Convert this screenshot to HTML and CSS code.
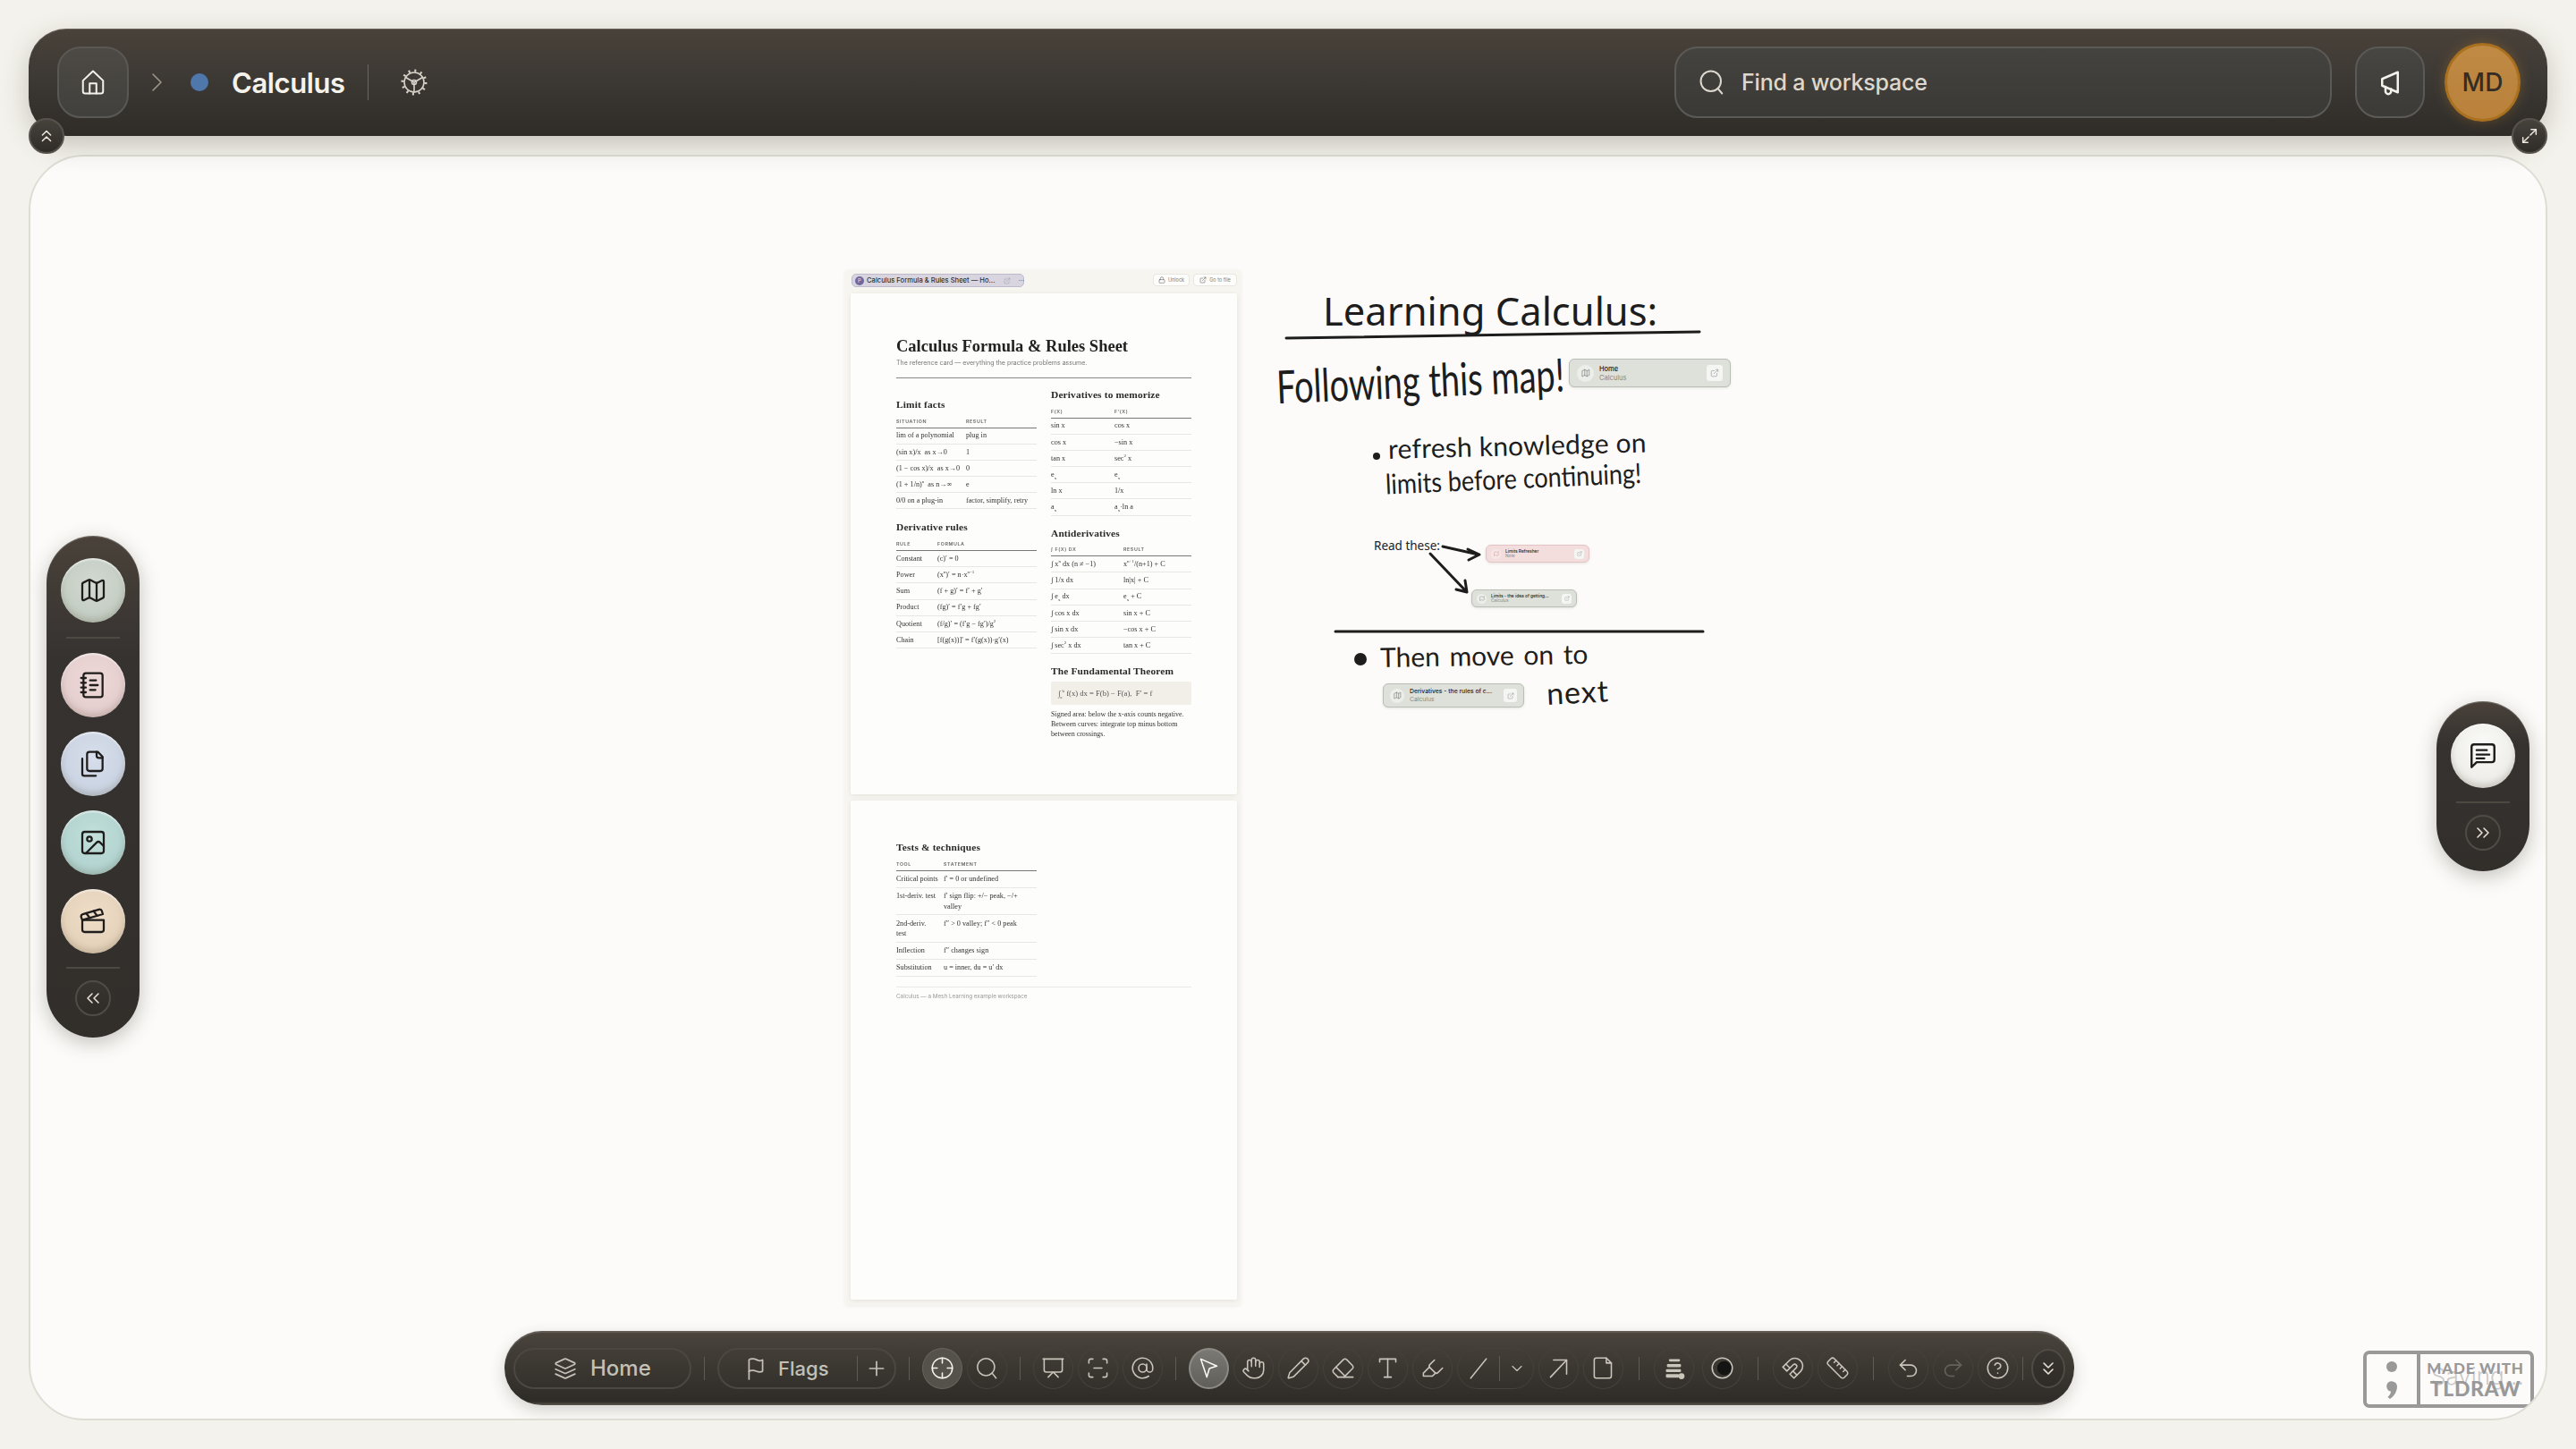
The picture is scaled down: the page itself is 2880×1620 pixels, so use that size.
FILE: index.html
```html
<!DOCTYPE html>
<html lang="en">
<head>
  <meta charset="UTF-8" />
  <title>Calculus</title>
  <link rel="stylesheet" href="styles.css">
</head>
<body>
  <header class="topbar">
    <button class="home-btn">
      <svg class="ico" viewBox="0 0 24 24"><path d="M3 10.500 12 2l9 8.500V20a2 2 0 0 1-2 2H5a2 2 0 0 1-2-2z"/><path d="M9 22v-9h6v9"/></svg>
    </button>
    <svg class="crumb" viewBox="0 0 24 24"><path d="m8 3 9 9-9 9"/></svg>
    <span class="dot"></span>
    <span class="ws-name">Calculus</span>
    <span class="bar-sep"></span>
    <svg class="gear" viewBox="0 0 32 32">
      <circle class="gear-teeth" cx="16" cy="16" r="13"/>
      <circle cx="16" cy="16" r="11"/>
      <path d="M16 16 6.500 10.500M16 16l9.500-5.500M16 16v11"/>
      <circle cx="16" cy="16" r="2.500"/>
    </svg>
    <div class="spacer"></div>
    <div class="search">
      <svg viewBox="0 0 24 24"><circle cx="11" cy="11" r="9"/><path d="m21 22-3.800-4.500"/></svg>
      <span>Find a workspace</span>
    </div>
    <button class="news-btn">
      <svg viewBox="0 0 24 24"><path d="M5 9v6l14 6V3z"/><path d="M8 16v4a2.500 2.500 0 0 0 5 0v-2"/></svg>
    </button>
    <div class="avatar">MD</div>
    <button class="corner corner-left"><svg viewBox="0 0 24 24"><path d="m17 11-5-5-5 5"/><path d="m17 18-5-5-5 5"/></svg></button>
    <button class="corner corner-right"><svg viewBox="0 0 24 24"><path d="M14 4h6v6"/><path d="m20 4-7 7"/><path d="M10 20H4v-6"/><path d="m4 20 7-7"/></svg></button>
  </header>

  <main class="canvas">
    <div class="board">
      <section class="embed">
        <div class="embed-head">
          <div class="embed-tag">
            <span class="tag-dot">P</span>
            <span class="tag-title">Calculus Formula &amp; Rules Sheet — Ho...</span>
            <svg viewBox="0 0 24 24"><path d="M15 3h6v6"/><path d="M10 14 21 3"/><path d="M18 13v6a2 2 0 0 1-2 2H5a2 2 0 0 1-2-2V8a2 2 0 0 1 2-2h6"/></svg>
            <span class="tag-more">···</span>
          </div>
          <div class="embed-btn embed-btn-lock">
            <svg viewBox="0 0 24 24"><rect x="3" y="11" width="18" height="11" rx="2"/><path d="M7 11V7a5 5 0 0 1 10 0v4"/></svg>Unlock
          </div>
          <div class="embed-btn">
            <svg viewBox="0 0 24 24"><path d="M15 3h6v6"/><path d="M10 14 21 3"/><path d="M18 13v6a2 2 0 0 1-2 2H5a2 2 0 0 1-2-2V8a2 2 0 0 1 2-2h6"/></svg>Go to file
          </div>
        </div>

        <article class="page page-one">
          <h1>Calculus Formula &amp; Rules Sheet</h1>
          <p class="lede">The reference card — everything the practice problems assume.</p>
          <div class="cols">
            <div class="col col-left">
              <h2>Limit facts</h2>
              <table class="t-limits">
                <tr><th>Situation</th><th>Result</th></tr>
                <tr><td>lim of a polynomial</td><td>plug in</td></tr>
                <tr><td>(sin x)/x &nbsp;as x→0</td><td>1</td></tr>
                <tr><td>(1 − cos x)/x &nbsp;as x→0</td><td>0</td></tr>
                <tr><td>(1 + 1/n)<sup>n</sup> &nbsp;as n→∞</td><td>e</td></tr>
                <tr><td>0/0 on a plug-in</td><td>factor, simplify, retry</td></tr>
              </table>
              <h2>Derivative rules</h2>
              <table class="t-rules">
                <tr><th>Rule</th><th>Formula</th></tr>
                <tr><td>Constant</td><td>(c)′ = 0</td></tr>
                <tr><td>Power</td><td>(x<sup>n</sup>)′ = n·x<sup>n−1</sup></td></tr>
                <tr><td>Sum</td><td>(f + g)′ = f′ + g′</td></tr>
                <tr><td>Product</td><td>(fg)′ = f′g + fg′</td></tr>
                <tr><td>Quotient</td><td>(f/g)′ = (f′g − fg′)/g<sup>2</sup></td></tr>
                <tr><td>Chain</td><td>[f(g(x))]′ = f′(g(x))·g′(x)</td></tr>
              </table>
            </div>
            <div class="col col-right">
              <h2>Derivatives to memorize</h2>
              <table class="t-derivs">
                <tr><th>f(x)</th><th>f′(x)</th></tr>
                <tr><td>sin x</td><td>cos x</td></tr>
                <tr><td>cos x</td><td>−sin x</td></tr>
                <tr><td>tan x</td><td>sec<sup>2</sup> x</td></tr>
                <tr><td>e<sub>x</sub></td><td>e<sub>x</sub></td></tr>
                <tr><td>ln x</td><td>1/x</td></tr>
                <tr><td>a<sub>x</sub></td><td>a<sub>x</sub>·ln a</td></tr>
              </table>
              <h2>Antiderivatives</h2>
              <table class="t-anti">
                <tr><th>∫ f(x) dx</th><th>Result</th></tr>
                <tr><td>∫ x<sup>n</sup> dx (n ≠ −1)</td><td>x<sup>n+1</sup>/(n+1) + C</td></tr>
                <tr><td>∫ 1/x dx</td><td>ln|x| + C</td></tr>
                <tr><td>∫ e<sub>x</sub> dx</td><td>e<sub>x</sub> + C</td></tr>
                <tr><td>∫ cos x dx</td><td>sin x + C</td></tr>
                <tr><td>∫ sin x dx</td><td>−cos x + C</td></tr>
                <tr><td>∫ sec<sup>2</sup> x dx</td><td>tan x + C</td></tr>
              </table>
              <h2>The Fundamental Theorem</h2>
              <div class="formula">∫<sub>a</sub><sup>b</sup> f(x) dx = F(b) − F(a), &nbsp;F′ = f</div>
              <p class="note">Signed area: below the x-axis counts negative. Between curves: integrate top minus bottom between crossings.</p>
            </div>
          </div>
        </article>

        <article class="page page-two">
          <div class="col col-left">
            <h2>Tests &amp; techniques</h2>
            <table class="t-tests">
              <tr><th>Tool</th><th>Statement</th></tr>
              <tr><td>Critical points</td><td>f′ = 0 or undefined</td></tr>
              <tr><td>1st-deriv. test</td><td>f′ sign flip: +/− peak, −/+ valley</td></tr>
              <tr><td>2nd-deriv.<br>test</td><td>f″ &gt; 0 valley; f″ &lt; 0 peak</td></tr>
              <tr><td>Inflection</td><td>f″ changes sign</td></tr>
              <tr><td>Substitution</td><td>u = inner, du = u′ dx</td></tr>
            </table>
          </div>
          <div class="page-foot">Calculus — a Mesh Learning example workspace</div>
        </article>
      </section>

      <div class="big-title">Learning Calculus:</div>
      <div class="hand hand-map">Following this map!</div>
      <div class="hand hand-refresh">refresh knowledge on</div>
      <div class="hand hand-limits">limits before continuing!</div>
      <div class="hand hand-then">Then move on to</div>
      <div class="hand hand-next">next</div>
      <div class="read-these">Read these:</div>

      <svg class="ink" viewBox="0 0 2880 1620">
        <path d="M1438 378 1900 371"/>
        <path d="M1493 706H1904"/>
        <path d="M1613 611 1653 620M1641 614 1654 620 1642 626"/>
        <path d="M1599 619 1640 662M1638 649 1640 662 1628 659"/>
        <circle class="ink-dot" cx="1539" cy="510" r="4"/>
        <circle class="ink-dot" cx="1521" cy="737" r="7"/>
      </svg>

      <div class="card card-home">
        <span class="card-ico"><svg viewBox="0 0 24 24"><path d="M3 6l6-3 6 3 6-3v15l-6 3-6-3-6 3z"/><path d="M9 3v15M15 6v15"/></svg></span>
        <span class="card-text"><b>Home</b><i>Calculus</i></span>
        <span class="card-open"><svg viewBox="0 0 24 24"><path d="M15 3h6v6"/><path d="M10 14 21 3"/><path d="M18 13v6a2 2 0 0 1-2 2H5a2 2 0 0 1-2-2V8a2 2 0 0 1 2-2h6"/></svg></span>
      </div>
      <div class="card card-note">
        <span class="card-ico"><svg viewBox="0 0 24 24"><path d="M3 6l6-3 6 3 6-3v15l-6 3-6-3-6 3z"/></svg></span>
        <span class="card-text"><b>Limits Refresher</b><i>Note</i></span>
        <span class="card-open"><svg viewBox="0 0 24 24"><path d="M15 3h6v6"/><path d="M10 14 21 3"/><path d="M18 13v6a2 2 0 0 1-2 2H5a2 2 0 0 1-2-2V8a2 2 0 0 1 2-2h6"/></svg></span>
      </div>
      <div class="card card-limits">
        <span class="card-ico"><svg viewBox="0 0 24 24"><path d="M3 6l6-3 6 3 6-3v15l-6 3-6-3-6 3z"/></svg></span>
        <span class="card-text"><b>Limits - the idea of getting...</b><i>Calculus</i></span>
        <span class="card-open"><svg viewBox="0 0 24 24"><path d="M15 3h6v6"/><path d="M10 14 21 3"/><path d="M18 13v6a2 2 0 0 1-2 2H5a2 2 0 0 1-2-2V8a2 2 0 0 1 2-2h6"/></svg></span>
      </div>
      <div class="card card-derivs">
        <span class="card-ico"><svg viewBox="0 0 24 24"><path d="M3 6l6-3 6 3 6-3v15l-6 3-6-3-6 3z"/><path d="M9 3v15M15 6v15"/></svg></span>
        <span class="card-text"><b>Derivatives - the rules of c...</b><i>Calculus</i></span>
        <span class="card-open"><svg viewBox="0 0 24 24"><path d="M15 3h6v6"/><path d="M10 14 21 3"/><path d="M18 13v6a2 2 0 0 1-2 2H5a2 2 0 0 1-2-2V8a2 2 0 0 1 2-2h6"/></svg></span>
      </div>
    </div>

    <nav class="rail rail-left">
      <button class="orb orb-map"><svg viewBox="0 0 24 24"><path d="M14.106 5.553a2 2 0 0 0 1.788 0l3.659-1.830A1 1 0 0 1 21 4.619v12.764a1 1 0 0 1-.553.894l-4.553 2.277a2 2 0 0 1-1.788 0l-4.212-2.106a2 2 0 0 0-1.788 0l-3.659 1.830A1 1 0 0 1 3 19.381V6.618a1 1 0 0 1 .553-.894l4.553-2.277a2 2 0 0 1 1.788 0z"/><path d="M15 5.764v15"/><path d="M9 3.236v15"/></svg></button>
      <span class="rail-sep"></span>
      <div class="rail-group">
        <button class="orb orb-note"><svg viewBox="0 0 24 24"><path d="M2 6h4M2 10h4M2 14h4M2 18h4"/><rect x="4" y="2" width="16" height="20" rx="2"/><path d="M9.500 8h5M9.500 12H16M9.500 16H14"/></svg></button>
        <button class="orb orb-file"><svg viewBox="0 0 24 24"><path d="M20 7h-3a2 2 0 0 1-2-2V2"/><path d="M9 18a2 2 0 0 1-2-2V4a2 2 0 0 1 2-2h7l4 4v10a2 2 0 0 1-2 2Z"/><path d="M3 7.600v12.800A1.600 1.600 0 0 0 4.600 22h9.800"/></svg></button>
        <button class="orb orb-image"><svg viewBox="0 0 24 24"><rect x="3" y="3" width="18" height="18" rx="2"/><circle cx="9" cy="9" r="2"/><path d="m21 15-3.086-3.086a2 2 0 0 0-2.828 0L6 21"/></svg></button>
        <button class="orb orb-clap"><svg viewBox="0 0 24 24"><path d="M20.200 6 3 11l-.9-2.400c-.3-1.100.3-2.200 1.300-2.500l13.500-4c1.100-.3 2.200.3 2.500 1.300Z"/><path d="m6.200 5.300 3.100 3.900"/><path d="m12.400 3.400 3.100 4"/><path d="M3 11h18v8a2 2 0 0 1-2 2H5a2 2 0 0 1-2-2Z"/></svg></button>
      </div>
      <span class="rail-sep rail-sep-low"></span>
      <button class="mini"><svg viewBox="0 0 24 24"><path d="m11 17-5-5 5-5"/><path d="m18 17-5-5 5-5"/></svg></button>
    </nav>

    <nav class="rail rail-right">
      <button class="orb orb-chat"><svg viewBox="0 0 24 24"><path d="M21 15a2 2 0 0 1-2 2H7l-4 4V5a2 2 0 0 1 2-2h14a2 2 0 0 1 2 2z"/><path d="M7 7.500h8M7 11h10M7 14h6"/></svg></button>
      <span class="rail-sep rail-sep-low"></span>
      <button class="mini"><svg viewBox="0 0 24 24"><path d="m6 17 5-5-5-5"/><path d="m13 17 5-5-5-5"/></svg></button>
    </nav>

    <div class="toolbar">
      <button class="pill pill-home">
        <svg viewBox="0 0 24 24"><path d="m12.830 2.180a2 2 0 0 0-1.660 0L2.600 6.080a1 1 0 0 0 0 1.830l8.580 3.910a2 2 0 0 0 1.660 0l8.580-3.900a1 1 0 0 0 0-1.830Z"/><path d="m22 17.650-9.170 4.160a2 2 0 0 1-1.660 0L2 17.650"/><path d="m22 12.650-9.170 4.160a2 2 0 0 1-1.660 0L2 12.650"/></svg>
        Home
      </button>
      <span class="tb-sep"></span>
      <div class="pill pill-flags">
        <svg viewBox="0 0 24 24"><path d="M5 15s1-1 4-1 4 1.500 7 1.500 3-1 3-1V3s-1 1-3 1-4-2-7-2-4 1-4 1z"/><path d="M5 23v-8"/></svg>
        <span>Flags</span>
        <i class="pill-div"></i>
        <svg class="pill-plus" viewBox="0 0 24 24"><path d="M5 12h14M12 5v14"/></svg>
      </div>
      <span class="tb-sep"></span>
      <div class="tools">
        <button class="tool tool-soft"><svg viewBox="0 0 24 24"><circle cx="12" cy="12" r="10"/><path d="M12 2v5M12 17v5M2 12h5M17 12h5"/></svg></button>
        <button class="tool"><svg viewBox="0 0 24 24"><circle cx="11" cy="11" r="8.500"/><path d="m21 22-4-5"/></svg></button>
      </div>
      <span class="tb-sep"></span>
      <div class="tools">
        <button class="tool"><svg viewBox="0 0 24 24"><path d="M2 3h20"/><path d="M21 3v11a2 2 0 0 1-2 2H5a2 2 0 0 1-2-2V3"/><path d="m7 21 5-5 5 5"/></svg></button>
        <button class="tool"><svg viewBox="0 0 24 24"><path d="M3 7V5a2 2 0 0 1 2-2h2"/><path d="M17 3h2a2 2 0 0 1 2 2v2"/><path d="M21 17v2a2 2 0 0 1-2 2h-2"/><path d="M7 21H5a2 2 0 0 1-2-2v-2"/><path d="M8 12h8"/></svg></button>
        <button class="tool"><svg viewBox="0 0 24 24"><circle cx="12" cy="12" r="4"/><path d="M16 8v5a3 3 0 0 0 6 0v-1a10 10 0 1 0-4 8"/></svg></button>
      </div>
      <span class="tb-sep"></span>
      <div class="tools">
        <button class="tool tool-active"><svg viewBox="0 0 24 24"><path d="m4 3 16 7-7.500 2.500L10 21z"/></svg></button>
        <button class="tool"><svg viewBox="0 0 24 24"><path d="M18 11V6a2 2 0 0 0-2-2a2 2 0 0 0-2 2"/><path d="M14 10V4a2 2 0 0 0-2-2a2 2 0 0 0-2 2v2"/><path d="M10 10.500V6a2 2 0 0 0-2-2a2 2 0 0 0-2 2v8"/><path d="M18 8a2 2 0 1 1 4 0v6a8 8 0 0 1-8 8h-2c-2.800 0-4.500-.86-5.990-2.340l-3.600-3.600a2 2 0 0 1 2.830-2.820L7 15"/></svg></button>
        <button class="tool"><svg viewBox="0 0 24 24"><path d="M21.174 6.812a1 1 0 0 0-3.986-3.987L3.842 16.174a2 2 0 0 0-.5.83l-1.321 4.352a.5.5 0 0 0 .623.622l4.353-1.320a2 2 0 0 0 .83-.497z"/><path d="m15 5 4 4"/></svg></button>
        <button class="tool"><svg viewBox="0 0 24 24"><path d="m7 21-4.300-4.300c-1-1-1-2.500 0-3.400l9.600-9.600c1-1 2.500-1 3.400 0l5.600 5.600c1 1 1 2.500 0 3.400L13 21"/><path d="M22 21H7"/><path d="m5 11 9 9"/></svg></button>
        <button class="tool"><svg viewBox="0 0 24 24"><path d="M4 6V3h16v3"/><path d="M12 3v18"/><path d="M8.500 21h7"/></svg></button>
        <button class="tool"><svg viewBox="0 0 24 24"><path d="m9 11-6 6v3h9l3-3"/><path d="m22 12-4.600 4.600a2 2 0 0 1-2.800 0l-5.200-5.200a2 2 0 0 1 0-2.800L14 4"/></svg></button>
        <div class="tool-split">
          <svg viewBox="0 0 24 24"><path d="M4 22 20 2"/></svg>
          <i class="pill-div"></i>
          <svg class="split-down" viewBox="0 0 24 24"><path d="m6 9 6 6 6-6"/></svg>
        </div>
        <button class="tool"><svg viewBox="0 0 24 24"><path d="M7 4h13v14"/><path d="M4 21 20 4"/></svg></button>
        <button class="tool"><svg viewBox="0 0 24 24"><path d="M5 2h10l5 5v13a2 2 0 0 1-2 2H5a2 2 0 0 1-2-2V4a2 2 0 0 1 2-2z"/><path d="M15 2v5h5"/></svg></button>
      </div>
      <span class="tb-sep tb-sep-wide"></span>
      <div class="tools tools-style">
        <button class="tool"><svg class="solid" viewBox="0 0 24 24"><rect x="7" y="3" width="11" height="2.500" rx="1"/><rect x="5" y="8" width="14" height="3" rx="1"/><rect x="4" y="13" width="15" height="3" rx="1"/><rect x="4" y="18" width="13" height="3.500" rx="1"/><circle cx="19.500" cy="20" r="3"/></svg></button>
        <button class="tool"><svg viewBox="0 0 24 24"><circle cx="12" cy="12" r="10"/><circle class="swatch" cx="14" cy="12" r="7"/></svg></button>
      </div>
      <span class="tb-sep tb-sep-wide"></span>
      <div class="tools">
        <button class="tool"><svg viewBox="0 0 24 24"><path d="m6 15-4-4 6.750-6.770a7.790 7.790 0 0 1 11 11L13 22l-4-4 6.390-6.360a2.140 2.140 0 0 0-3-3L6 15"/><path d="m5 8 4 4"/><path d="m12 15 4 4"/></svg></button>
        <button class="tool"><svg viewBox="0 0 24 24"><path d="M21.300 15.300a2.400 2.400 0 0 1 0 3.400l-2.600 2.600a2.400 2.400 0 0 1-3.400 0L2.700 8.700a2.410 2.410 0 0 1 0-3.400l2.600-2.600a2.410 2.410 0 0 1 3.400 0Z"/><path d="m14.500 12.500 2-2"/><path d="m11.500 9.500 2-2"/><path d="m8.500 6.500 2-2"/><path d="m17.500 15.500 2-2"/></svg></button>
      </div>
      <span class="tb-sep tb-sep-wide"></span>
      <div class="tools">
        <button class="tool"><svg viewBox="0 0 24 24"><path d="M9 14 4 9l5-5"/><path d="M4 9h10.500a5.500 5.500 0 0 1 0 11H11"/></svg></button>
        <button class="tool tool-off"><svg viewBox="0 0 24 24"><path d="m15 14 5-5-5-5"/><path d="M20 9H9.500a5.500 5.500 0 0 0 0 11H13"/></svg></button>
        <button class="tool"><svg viewBox="0 0 24 24"><circle cx="12" cy="12" r="10"/><path d="M9.090 9a3 3 0 0 1 5.830 1c0 2-3 3-3 3"/><path d="M12 17h.01"/></svg></button>
      </div>
      <span class="tb-sep tb-sep-thin"></span>
      <button class="mini mini-tb"><svg viewBox="0 0 24 24"><path d="m7 6 5 5 5-5"/><path d="m7 13 5 5 5-5"/></svg></button>
    </div>

    <div class="watermark">
      <div class="wm-logo">
        <svg viewBox="0 0 24 48"><circle cx="12" cy="10" r="6"/><path d="M6.500 30a6 6 0 0 1 11.500 2c0 6-3.500 11-8 14l-2.500-2c2-2 3.500-4 3.500-6.500-3 .5-5.500-4-4.500-7.500z"/></svg>
      </div>
      <div class="wm-text"><span>MADE WITH</span><b>TLDRAW</b></div>
      <div class="saving">Saving...</div>
    </div>
  </main>
</body>
</html>
```

FILE: styles.css
```css
* {
  box-sizing: border-box;
}

body {
  display: flex;
  flex-direction: column;
  height: 100vh;
  margin: 0;
  padding: 32px 32px 32px;
  background-color: #f4f2ec;
  font-family: Inter, "Liberation Sans", sans-serif;
  overflow: hidden;
}

button {
  padding: 0;
  font-family: inherit;
  background: none;
  border: 0;
}

svg {
  display: block;
  fill: none;
  stroke: currentColor;
  stroke-linecap: round;
  stroke-linejoin: round;
  stroke-width: 1.6;
}

/* top bar */
.topbar {
  position: relative;
  z-index: 3;
  display: flex;
  align-items: center;
  flex: none;
  height: 120px;
  padding: 0 30px 0 32px;
  color: #f5f2ec;
  background: linear-gradient(#4a423a, #3a3733 55%, #2f2c28);
  border-radius: 42px;
  box-shadow: 0 10px 30px rgba(60, 55, 40, 0.25), inset 0 1px 1px rgba(255, 255, 255, 0.18);
}

.home-btn {
  display: flex;
  align-items: center;
  justify-content: center;
  width: 80px;
  height: 80px;
  color: #f5f2ec;
  background: linear-gradient(#4d4a45, #42403c);
  border: 2px solid #5a5854;
  border-radius: 26px;
}

.home-btn svg {
  width: 30px;
  height: 30px;
}

.crumb {
  width: 24px;
  height: 24px;
  margin-left: 19px;
  color: #9c978b;
}

.dot {
  width: 20px;
  height: 20px;
  margin-left: 26px;
  background: #5077ac;
  border-radius: 50%;
}

.ws-name {
  margin-left: 26px;
  font-size: 31px;
  font-weight: 600;
  letter-spacing: -0.4px;
}

.bar-sep {
  width: 1px;
  height: 40px;
  margin-left: 25px;
  background: #6b675f;
}

.gear {
  width: 32px;
  height: 32px;
  margin-left: 35px;
  color: #d8d3c8;
}

.gear-teeth {
  stroke-width: 3;
  stroke-dasharray: 2 4.800;
  stroke-linecap: butt;
}

.spacer {
  flex: 1;
}

.search {
  display: flex;
  align-items: center;
  width: 735px;
  height: 80px;
  padding-left: 25px;
  color: #dcd8ce;
  font-size: 25px;
  font-weight: 500;
  letter-spacing: -0.2px;
  background: linear-gradient(#454340, #3b3936);
  border: 2px solid #5c5a56;
  border-radius: 26px;
}

.search svg {
  width: 30px;
  height: 30px;
  margin-right: 18px;
}

.news-btn {
  display: flex;
  align-items: center;
  justify-content: center;
  width: 78px;
  height: 80px;
  margin-left: 26px;
  color: #f5f2ec;
  background: linear-gradient(#484642, #3c3a37);
  border: 2px solid #5c5a56;
  border-radius: 26px;
}

.news-btn svg {
  width: 30px;
  height: 30px;
  stroke-width: 2;
}

.avatar {
  display: flex;
  align-items: center;
  justify-content: center;
  width: 85px;
  height: 88px;
  margin-left: 22px;
  color: #332d25;
  font-size: 28px;
  font-weight: 500;
  background: linear-gradient(#c08a45, #b9813a);
  border: 3px solid #a9701f;
  border-radius: 50%;
  box-shadow: 0 0 14px rgba(190, 125, 40, 0.35);
}

.corner {
  position: absolute;
  top: 100px;
  display: flex;
  align-items: center;
  justify-content: center;
  width: 40px;
  height: 40px;
  color: #eeeae0;
  background: linear-gradient(#46423c, #2f2c28);
  border: 2px solid #57534c;
  border-radius: 50%;
}

.corner svg {
  width: 22px;
  height: 22px;
}

.corner-left {
  left: 0;
}

.corner-right {
  right: 0;
}

/* canvas */
.canvas {
  position: relative;
  z-index: 2;
  flex: 1;
  margin-top: 21px;
  background: #fcfbf9;
  border: 2px solid #dfddd3;
  border-radius: 62px;
  overflow: hidden;
}

.board {
  position: absolute;
  top: -175px;
  left: -34px;
  width: 2880px;
  height: 1620px;
}

/* pdf embed */
.embed {
  position: absolute;
  top: 302px;
  left: 945px;
  display: flex;
  flex-direction: column;
  width: 442px;
  height: 1157px;
  padding: 4px 4px 6px 6px;
  background: #f6f5f0;
  border-radius: 4px;
  box-shadow: 0 1px 4px rgba(80, 70, 50, 0.08);
}

.embed-head {
  display: flex;
  flex: none;
  align-items: flex-start;
  height: 22px;
  margin-left: 1px;
}

.embed-tag {
  display: flex;
  align-items: center;
  width: 193px;
  height: 15px;
  padding: 0 3px;
  color: #33312e;
  font-size: 7.600px;
  font-weight: 500;
  background: #d9d5e0;
  border: 1px solid #bfb9cc;
  border-radius: 5px;
}

.tag-dot {
  flex: none;
  width: 10px;
  height: 10px;
  color: #d9d5e0;
  font-size: 6px;
  line-height: 10px;
  text-align: center;
  background: #6f6a9b;
  border-radius: 50%;
}

.tag-title {
  margin-left: 3px;
  white-space: nowrap;
}

.embed-tag svg {
  flex: none;
  width: 8px;
  height: 8px;
  margin-left: 10px;
  color: #a09ca8;
}

.tag-more {
  margin-left: 8px;
  color: #777;
}

.embed-btn {
  display: flex;
  align-items: center;
  justify-content: center;
  gap: 3px;
  width: 49px;
  height: 14px;
  margin-left: 4px;
  color: #807d76;
  font-size: 5.500px;
  background: #fdfdfb;
  border: 1px solid #e9e7df;
  border-radius: 4px;
}

.embed-btn svg {
  width: 8px;
  height: 8px;
  color: #555;
}

.embed-btn-lock {
  width: 41px;
  margin-left: auto;
}

.page {
  flex: none;
  width: 432px;
  margin-bottom: 7px;
  padding: 0 51px;
  color: #333;
  font-family: "Liberation Serif", serif;
  background: #fdfdfb;
  border-radius: 2px;
  box-shadow: 0 1px 5px rgba(80, 70, 50, 0.1);
  filter: blur(0.3px);
}

.page-one {
  height: 560px;
  padding-top: 48px;
}

.page-two {
  height: 558px;
  margin-bottom: 0;
  padding-top: 44px;
}

.page h1 {
  margin: 0;
  color: #222;
  font-size: 18.500px;
  font-weight: 700;
  line-height: 22px;
}

.lede {
  margin: 3px 0 0;
  padding-bottom: 11px;
  color: #777;
  font-family: Inter, sans-serif;
  font-size: 7px;
  line-height: 10px;
  border-bottom: 1.500px solid #888;
}

.cols {
  display: grid;
  grid-template-columns: 157px 157px;
  column-gap: 16px;
}

.col-left {
  padding-top: 21px;
}

.col-right {
  padding-top: 10px;
}

.page-two .col-left {
  width: 157px;
  padding-top: 0;
}

.page h2 {
  margin: 12px 0 0;
  color: #2a2a2a;
  font-size: 11.400px;
  font-weight: 700;
  line-height: 16px;
  letter-spacing: 0.15px;
}

.page h2:first-child {
  margin-top: 0;
}

.col-right h2 {
  margin-top: 11px;
}

.page table {
  width: 100%;
  table-layout: fixed;
  border-collapse: collapse;
}

.page th {
  height: 18px;
  padding: 0 0 4px;
  color: #666;
  font-family: Inter, sans-serif;
  font-size: 5.300px;
  font-weight: 600;
  text-align: left;
  vertical-align: bottom;
  text-transform: uppercase;
  letter-spacing: 0.6px;
  border-bottom: 1px solid #777;
}

.page td {
  height: 18.200px;
  padding: 0;
  font-size: 8.200px;
  line-height: 11.500px;
  border-bottom: 1px solid #e9e7e1;
}

.page sup,
.page sub {
  font-size: 5px;
  line-height: 0;
}

.t-limits th:first-child { width: 78px; }
.t-rules th:first-child { width: 46px; }
.t-derivs th:first-child { width: 71px; }
.t-anti th:first-child { width: 81px; }
.t-tests th:first-child { width: 53px; }

.t-tests td {
  vertical-align: top;
  padding-top: 3.500px;
  padding-bottom: 3px;
}

.formula {
  height: 26px;
  margin-top: 4px;
  padding-left: 8px;
  font-size: 8.600px;
  line-height: 26px;
  color: #555;
  background: #f1efe8;
  border-radius: 2px;
}

.note {
  margin: 5px 0 0;
  font-size: 8px;
  line-height: 11px;
}

.page-foot {
  margin-top: 11px;
  padding-top: 5px;
  color: #999;
  font-family: Inter, sans-serif;
  font-size: 6.300px;
  line-height: 10px;
  border-top: 1px solid #eceae4;
}

/* canvas notes */
.big-title {
  position: absolute;
  top: 317px;
  left: 1479px;
  color: #1d1d1d;
  font-family: "Noto Sans", sans-serif;
  font-size: 43.500px;
  line-height: 60px;
  white-space: nowrap;
}

.hand {
  position: absolute;
  color: #1d1d1d;
  font-family: Lato, sans-serif;
  white-space: nowrap;
  transform-origin: left center;
}

.hand-map {
  top: 403px;
  left: 1427px;
  font-size: 38px;
  line-height: 56px;
  transform: rotate(-2.500deg) scaleY(1.35);
}

.hand-refresh {
  top: 482px;
  left: 1552px;
  font-size: 30px;
  line-height: 38px;
  letter-spacing: 0.2px;
  transform: rotate(-1.500deg);
}

.hand-limits {
  top: 522px;
  left: 1549px;
  font-size: 27px;
  line-height: 38px;
  transform: rotate(-2.500deg) scaleY(1.15);
}

.hand-then {
  top: 715px;
  left: 1543px;
  font-size: 30px;
  line-height: 38px;
  word-spacing: 3px;
  transform: rotate(-1deg);
}

.hand-next {
  top: 756px;
  left: 1729px;
  font-size: 34px;
  line-height: 38px;
  letter-spacing: 1px;
  transform: rotate(-3deg);
}

.read-these {
  position: absolute;
  top: 601px;
  left: 1536px;
  color: #222;
  font-family: "Noto Sans", sans-serif;
  font-size: 13.500px;
  line-height: 18px;
  white-space: nowrap;
}

.ink {
  position: absolute;
  top: 0;
  left: 0;
  width: 2880px;
  height: 1620px;
  color: #1d1d1d;
  stroke-width: 3;
  pointer-events: none;
}

.ink-dot {
  fill: #1d1d1d;
  stroke: none;
}

.card {
  position: absolute;
  display: flex;
  align-items: center;
  color: #222;
  background: #dde1da;
  border: 1px solid #b9beb6;
  border-radius: 6px;
  box-shadow: 0 1px 3px rgba(60, 60, 50, 0.12);
}

.card-ico {
  display: flex;
  flex: none;
  align-items: center;
  justify-content: center;
  color: #777;
  background: #eceeea;
  border-radius: 50%;
}

.card-text {
  display: flex;
  flex: 1;
  flex-direction: column;
  min-width: 0;
  white-space: nowrap;
}

.card-text b {
  font-weight: 500;
}

.card-text i {
  color: #888;
  font-style: normal;
}

.card-open {
  display: flex;
  flex: none;
  align-items: center;
  justify-content: center;
  color: #999;
  background: #f5f6f3;
  border-radius: 3px;
}

.card-home {
  top: 401px;
  left: 1754px;
  width: 181px;
  height: 32px;
  padding: 0 8px;
}

.card-home .card-ico { width: 19px; height: 19px; margin-right: 6px; }
.card-home .card-ico svg { width: 10px; height: 10px; }
.card-home .card-open { width: 18px; height: 18px; }
.card-home .card-open svg { width: 10px; height: 10px; }
.card-home .card-text { gap: 1px; font-size: 7.500px; line-height: 9px; }

.card-note {
  top: 609px;
  left: 1661px;
  width: 116px;
  height: 20px;
  padding: 0 5px;
  background: #f3dedd;
  border-color: #e3c3c3;
}

.card-limits {
  top: 659px;
  left: 1645px;
  width: 118px;
  height: 20px;
  padding: 0 5px;
}

.card-note .card-ico,
.card-limits .card-ico { width: 11px; height: 11px; margin-right: 5px; }
.card-note .card-ico svg,
.card-limits .card-ico svg { width: 6px; height: 6px; }
.card-note .card-ico { color: #c27e80; background: #f6e7e6; }
.card-note .card-text,
.card-limits .card-text { font-size: 4.800px; line-height: 5.500px; }
.card-note .card-open,
.card-limits .card-open { width: 11px; height: 11px; }
.card-note .card-open svg,
.card-limits .card-open svg { width: 6px; height: 6px; }

.card-derivs {
  top: 764px;
  left: 1546px;
  width: 158px;
  height: 27px;
  padding: 0 7px;
}

.card-derivs .card-ico { width: 16px; height: 16px; margin-right: 6px; }
.card-derivs .card-ico svg { width: 9px; height: 9px; }
.card-derivs .card-text { font-size: 6.800px; line-height: 8.500px; }
.card-derivs .card-open { width: 15px; height: 15px; }
.card-derivs .card-open svg { width: 8px; height: 8px; }

/* side rails */
.rail {
  position: absolute;
  z-index: 4;
  display: flex;
  flex-direction: column;
  align-items: center;
  width: 104px;
  padding-top: 25px;
  background: linear-gradient(#4a423a, #353230 25%, #322f2b);
  border-radius: 52px;
  box-shadow: 0 6px 22px rgba(50, 45, 35, 0.28), inset 0 1px 1px rgba(255, 255, 255, 0.25);
}

.rail-left {
  top: 424px;
  left: 18px;
  height: 561px;
}

.rail-right {
  top: 609px;
  right: 18px;
  height: 190px;
}

.rail-group {
  display: flex;
  flex-direction: column;
  gap: 16px;
}

.rail-sep {
  flex: none;
  width: 60px;
  height: 2px;
  margin: 16px 0;
  background: #4c4943;
}

.rail-sep-low {
  margin: 15px 0 13px;
}

.orb {
  display: flex;
  flex: none;
  align-items: center;
  justify-content: center;
  width: 72px;
  height: 72px;
  color: #1e1d1b;
  border-radius: 50%;
  box-shadow: inset 0 2px 2px rgba(255, 255, 255, 0.55), inset 0 -4px 6px rgba(90, 80, 60, 0.22);
}

.orb svg {
  width: 32px;
  height: 32px;
  stroke-width: 1.700;
}

.orb-map { background: radial-gradient(circle at 50% 40%, #d2d9d0, #bdc7bd); }
.orb-note { background: radial-gradient(circle at 50% 40%, #edd8d8, #e0c8c8); }
.orb-file { background: radial-gradient(circle at 50% 40%, #d7deeb, #c4cede); }
.orb-image { background: radial-gradient(circle at 50% 40%, #c2dfdb, #a9cdc9); }
.orb-clap { background: radial-gradient(circle at 50% 40%, #efddc8, #e0ccb3); }
.orb-chat { background: radial-gradient(circle at 50% 35%, #fbfbf9, #e6e5e0); }

.orb-chat svg {
  width: 34px;
  height: 34px;
}

.mini {
  display: flex;
  flex: none;
  align-items: center;
  justify-content: center;
  width: 40px;
  height: 40px;
  color: #e4dfd4;
  background: linear-gradient(#38342f, #2f2c28);
  border: 2px solid #4f4b45;
  border-radius: 50%;
}

.mini svg {
  width: 24px;
  height: 24px;
}

/* bottom toolbar */
.toolbar {
  position: absolute;
  z-index: 4;
  top: 1313px;
  left: 530px;
  display: flex;
  align-items: center;
  height: 83px;
  padding: 0 10px;
  color: #c4c0b6;
  background: linear-gradient(#4a443c, #3c3933 45%, #2f2c28 95%, #5b564c);
  border-radius: 42px;
  box-shadow: 0 6px 18px rgba(50, 45, 35, 0.2), inset 0 2px 1px rgba(255, 255, 255, 0.14);
}

.pill {
  display: flex;
  align-items: center;
  height: 46px;
  font-family: Inter, sans-serif;
  color: #c4c0b6;
  border: 2px solid #4b4842;
  border-radius: 23px;
}

.pill-home {
  width: 199px;
  padding-left: 43px;
  gap: 15px;
  font-size: 24px;
  font-weight: 500;
}

.pill-home svg {
  width: 26px;
  height: 26px;
}

.pill-flags {
  width: 200px;
  padding-left: 28px;
  font-size: 22px;
  font-weight: 500;
}

.pill-flags svg {
  width: 26px;
  height: 26px;
}

.pill-flags span {
  margin-left: 12px;
}

.pill-div {
  flex: none;
  width: 1px;
  height: 28px;
  background: #5f5b54;
}

.pill-flags .pill-div {
  margin-left: 32px;
}

.pill-flags .pill-plus {
  margin-left: 8px;
}

.tb-sep {
  flex: none;
  width: 1px;
  height: 26px;
  margin: 0 14px;
  background: #5f5b54;
}

.tb-sep-wide {
  margin: 0 16.500px;
}

.tb-sep-thin {
  margin: 0 9px 0 5px;
}

.tools {
  display: flex;
  align-items: center;
  gap: 5px;
}

.tools-style {
  gap: 9px;
}

.tool {
  display: flex;
  align-items: center;
  justify-content: center;
  width: 45px;
  height: 46px;
  color: #c9c5bb;
  border: 1px solid #45423c;
  border-radius: 50%;
}

.tool svg {
  width: 27px;
  height: 27px;
  stroke-width: 1.400;
}

.tool-soft {
  color: #f3f1ea;
  background: #55524c;
  border-color: #67645d;
}

.tool-active {
  color: #fbfaf5;
  background: linear-gradient(#7b7974, #615f5a);
  border: 2px solid #8d8b85;
}

.tool-off {
  color: #65625b;
}

.tool-split {
  display: flex;
  align-items: center;
  justify-content: space-between;
  width: 86px;
  height: 46px;
  padding: 0 8px 0 10px;
  color: #c9c5bb;
  border: 1px solid #45423c;
  border-radius: 23px;
}

.tool-split svg {
  width: 26px;
  height: 26px;
  stroke-width: 1.400;
}

.tool-split .split-down {
  width: 20px;
  height: 20px;
}

.solid {
  fill: #c9c5bb;
  stroke: none;
}

.swatch {
  fill: #141413;
  stroke: none;
}

.mini-tb {
  width: 38px;
  height: 44px;
}

/* tldraw mark */
.watermark {
  position: absolute;
  z-index: 4;
  right: 13px;
  bottom: 12px;
  display: flex;
  width: 191px;
  height: 64px;
  color: #999;
  border: 4px solid #999;
  border-radius: 7px;
}

.wm-logo {
  display: flex;
  flex: none;
  align-items: center;
  justify-content: center;
  width: 60px;
  border-right: 4px solid #999;
}

.wm-logo svg {
  width: 24px;
  height: 48px;
  fill: #999;
  stroke: none;
}

.wm-text {
  display: flex;
  flex-direction: column;
  align-items: center;
  flex: 1;
  padding-top: 6px;
  font-family: Lato, sans-serif;
  font-weight: 900;
}

.wm-text span {
  font-size: 17px;
  line-height: 20px;
  letter-spacing: 0.8px;
}

.wm-text b {
  font-size: 23px;
  font-weight: 900;
  line-height: 24px;
  letter-spacing: 0.6px;
}

.saving {
  position: absolute;
  top: 10px;
  left: 72px;
  color: rgba(150, 150, 150, 0.5);
  font-size: 26px;
  font-weight: 300;
  line-height: 30px;
}
```
